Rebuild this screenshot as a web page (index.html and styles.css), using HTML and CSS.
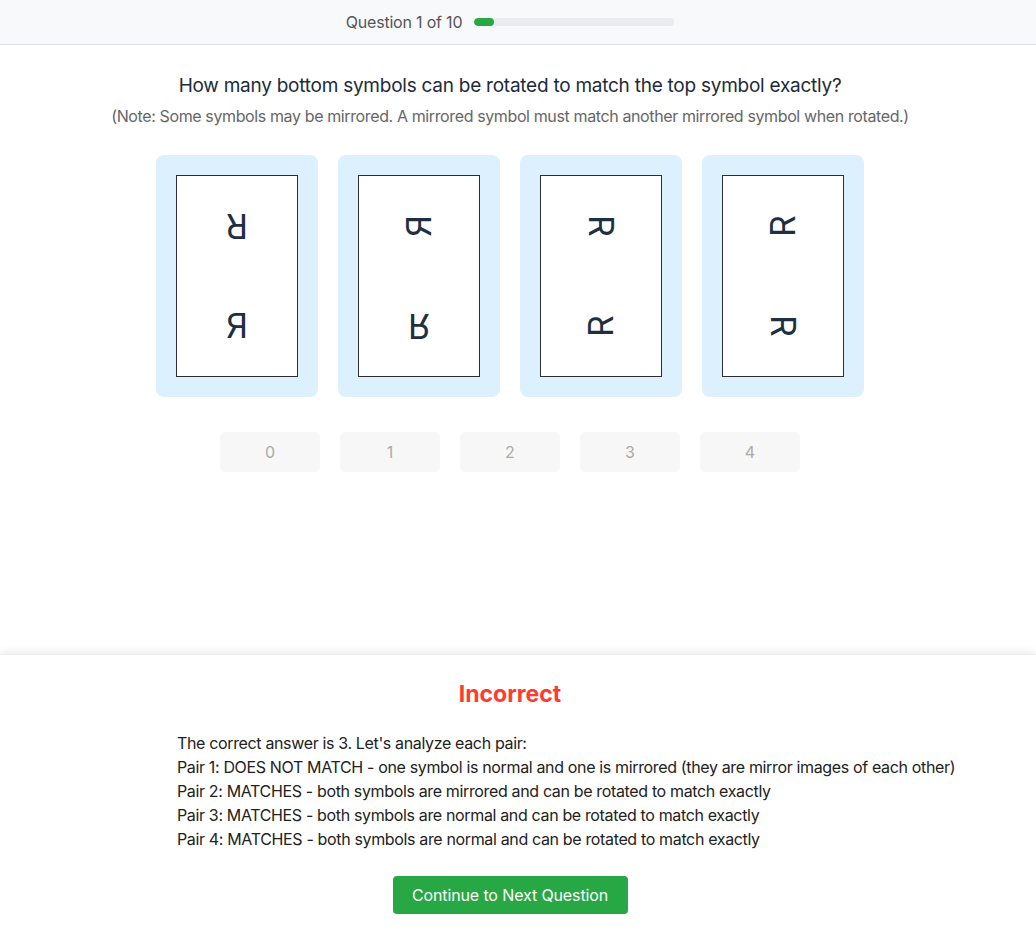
FILE: index.html
```html
<!DOCTYPE html>
<html lang="en">
<head>
<meta charset="utf-8">
<title>Symbol Rotation Quiz</title>
<link rel="stylesheet" href="styles.css">
</head>
<body>
<div class="page">
  <header class="topbar">
    <div class="topbar-inner">
      <span class="counter">Question 1 of 10</span>
      <div class="progress"><div class="progress-fill" style="width:10%"></div></div>
    </div>
  </header>

  <main class="main">
    <h1 class="question">How many bottom symbols can be rotated to match the top symbol exactly?</h1>
    <p class="note">(Note: Some symbols may be mirrored. A mirrored symbol must match another mirrored symbol when rotated.)</p>

    <div class="cards">
      <div class="card">
        <div class="pair">
          <div class="slot"><span class="glyph rot180">R</span></div>
          <div class="slot"><span class="glyph mirror">R</span></div>
        </div>
      </div>
      <div class="card">
        <div class="pair">
          <div class="slot"><span class="glyph rotccw-mirror">R</span></div>
          <div class="slot"><span class="glyph flipv">R</span></div>
        </div>
      </div>
      <div class="card">
        <div class="pair">
          <div class="slot"><span class="glyph rotcw">R</span></div>
          <div class="slot"><span class="glyph rotccw">R</span></div>
        </div>
      </div>
      <div class="card">
        <div class="pair">
          <div class="slot"><span class="glyph rotccw">R</span></div>
          <div class="slot"><span class="glyph rotcw">R</span></div>
        </div>
      </div>
    </div>

    <div class="answers">
      <button class="answer" disabled>0</button>
      <button class="answer" disabled>1</button>
      <button class="answer" disabled>2</button>
      <button class="answer" disabled>3</button>
      <button class="answer" disabled>4</button>
    </div>
  </main>

  <section class="feedback">
    <div class="feedback-inner">
      <h2 class="verdict">Incorrect</h2>
      <div class="explain">
        <div class="line">The correct answer is 3. Let's analyze each pair:</div>
        <div class="line">Pair 1: DOES NOT MATCH - one symbol is normal and one is mirrored (they are mirror images of each other)</div>
        <div class="line">Pair 2: MATCHES - both symbols are mirrored and can be rotated to match exactly</div>
        <div class="line">Pair 3: MATCHES - both symbols are normal and can be rotated to match exactly</div>
        <div class="line">Pair 4: MATCHES - both symbols are normal and can be rotated to match exactly</div>
      </div>
      <button class="next">Continue to Next Question</button>
    </div>
  </section>
</div>
</body>
</html>
```

FILE: styles.css
```css
* { box-sizing: border-box; }

html, body {
  margin: 0;
  padding: 0;
  background: #ffffff;
  font-family: Inter, "Noto Sans", "Liberation Sans", sans-serif;
  color: #1d2b3a;
}

.page {
  min-height: 934px;
  display: flex;
  flex-direction: column;
}

.topbar {
  background: #f8f9fa;
  border-bottom: 1px solid #dee2e6;
  height: 45px;
}

.topbar-inner {
  height: 44px;
  display: flex;
  align-items: center;
  justify-content: center;
  gap: 12px;
  padding-right: 16px;
}

.counter {
  font-size: 16px;
  letter-spacing: -0.2px;
  color: #555555;
}

.progress {
  width: 200px;
  height: 8px;
  background: #e9ecef;
  border-radius: 4px;
  overflow: hidden;
}

.progress-fill {
  height: 100%;
  background: #28a745;
  border-radius: 4px;
}

.main {
  padding: 29px 16px 0 0;
  display: flex;
  flex-direction: column;
  align-items: center;
}

.question {
  margin: 0;
  font-size: 19px;
  line-height: 24px;
  letter-spacing: -0.25px;
  font-weight: 400;
  color: #1d2b3a;
}

.note {
  margin: 6px 0 0;
  font-size: 16px;
  line-height: 24px;
  letter-spacing: -0.38px;
  color: #666666;
}

.cards {
  margin-top: 27px;
  display: flex;
  gap: 20px;
}

.card {
  background: #ddf0fd;
  border-radius: 8px;
  padding: 20px;
}

.pair {
  width: 122px;
  height: 202px;
  background: #ffffff;
  border: 1px solid #2b2f33;
  display: flex;
  flex-direction: column;
}

.slot {
  flex: 1;
  display: flex;
  align-items: center;
  justify-content: center;
}

.glyph {
  display: inline-block;
  font-size: 34px;
  line-height: 34px;
  color: #1d2f40;
  font-weight: 400;
}

.rot180 { transform: rotate(180deg); }
.mirror { transform: scaleX(-1); }
.flipv { transform: scaleY(-1); }
.rotcw { transform: rotate(90deg); }
.rotccw { transform: rotate(-90deg); }
.rotccw-mirror { transform: rotate(-90deg) scaleX(-1); }

.answers {
  margin-top: 35px;
  display: flex;
  gap: 20px;
}

.answer {
  width: 100px;
  height: 40px;
  border: none;
  border-radius: 6px;
  background: #f7f7f7;
  color: #aaaaaa;
  font-family: inherit;
  font-size: 16px;
  padding: 0;
}

.feedback {
  margin-top: auto;
  background: #ffffff;
  box-shadow: 0 -2px 8px rgba(0, 0, 0, 0.08);
  border-top: 1px solid #eeeeee;
}

.feedback-inner {
  padding: 23px 16px 20px 0;
  display: flex;
  flex-direction: column;
  align-items: center;
}

.verdict {
  margin: 0;
  font-size: 23px;
  line-height: 32px;
  font-weight: 700;
  color: #ff3b30;
}

.explain {
  margin-top: 21px;
  width: 666px;
  font-size: 16px;
  line-height: 24px;
  letter-spacing: -0.35px;
  color: #222222;
  white-space: nowrap;
}

.next {
  margin-top: 25px;
  width: 235px;
  height: 38px;
  border: none;
  border-radius: 4px;
  background: #28a745;
  color: #ffffff;
  font-family: inherit;
  font-size: 16px;
  letter-spacing: -0.12px;
  padding: 0;
}
```
